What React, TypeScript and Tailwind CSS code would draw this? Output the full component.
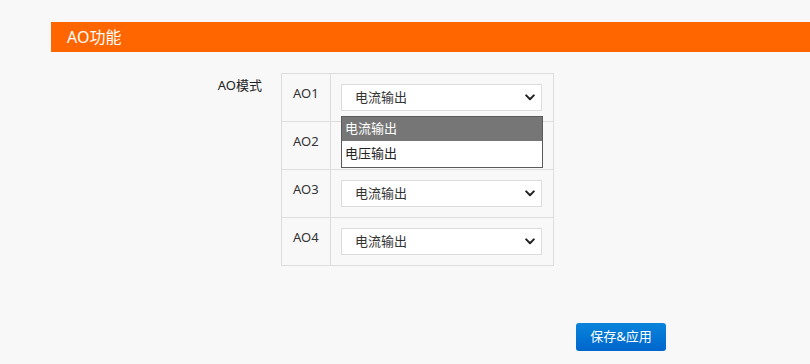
const font = { fontFamily: '"Noto Sans", "Noto Sans CJK SC", sans-serif' };

const Chevron = () => (
  <svg width="10" height="7" viewBox="0 0 10 7" className="shrink-0">
    <path d="M1.2 1.4 L5 5.2 L8.8 1.4" fill="none" stroke="#222" strokeWidth="2" strokeLinecap="round" strokeLinejoin="round" />
  </svg>
);

const ModeSelect = ({ value }: { value: string }) => (
  <div className="flex h-[27px] w-[201px] items-center justify-between border border-[#dcdcdc] bg-white pl-[13px] pr-[6px] text-[13px] text-[#333]">
    <span>{value}</span>
    <Chevron />
  </div>
);

const rows = ["AO1", "AO2", "AO3", "AO4"];

export default function App() {
  return (
    <div className="min-h-[364px] w-[810px] bg-[#f8f8f8] pt-[22px] text-[#333]" style={font}>
      {/* header bar */}
      <div className="ml-[51px] flex h-[30px] items-center bg-[#ff6600] pl-[16px] text-[16px] text-white">
        AO功能
      </div>

      {/* form */}
      <div className="mt-[21px] flex pl-[51px]">
        <div className="w-[211px] pt-[3px] text-right text-[13px] text-[#222]">AO模式</div>
        <div className="relative ml-[19px]">
          <table className="border-collapse">
            <tbody>
              {rows.map((r) => (
                <tr key={r} className="h-[48px]">
                  <td className="w-[49px] border border-[#dddddd] pl-[11px] pt-[10px] align-top text-[13px] text-[#333]">
                    {r}
                  </td>
                  <td className="w-[223px] border border-[#dddddd] pl-[10px] align-middle">
                    {/* AO2 sits under the open list, so only its box shows */}
                    {r === "AO2" ? (
                      <div className="h-[27px] w-[201px] border border-[#dcdcdc] bg-white" />
                    ) : (
                      <ModeSelect value="电流输出" />
                    )}
                  </td>
                </tr>
              ))}
            </tbody>
          </table>

          {/* open dropdown of AO1 */}
          <div className="absolute left-[60px] top-[43px] w-[202px] border border-[#5a5a5a] bg-white text-[13px]">
            <div className="flex h-[24px] items-center bg-[#767676] pl-[3px] text-white">电流输出</div>
            <div className="flex h-[26px] items-center pl-[3px] text-[#222]">电压输出</div>
          </div>
        </div>
      </div>

      {/* save */}
      <div className="mt-[57px] pl-[576px]">
        <button className="flex h-[28px] w-[90px] items-center justify-center rounded-[3px] bg-gradient-to-b from-[#0b84dc] to-[#0066cc] text-[13px] text-white">
          保存&amp;应用
        </button>
      </div>
    </div>
  );
}
